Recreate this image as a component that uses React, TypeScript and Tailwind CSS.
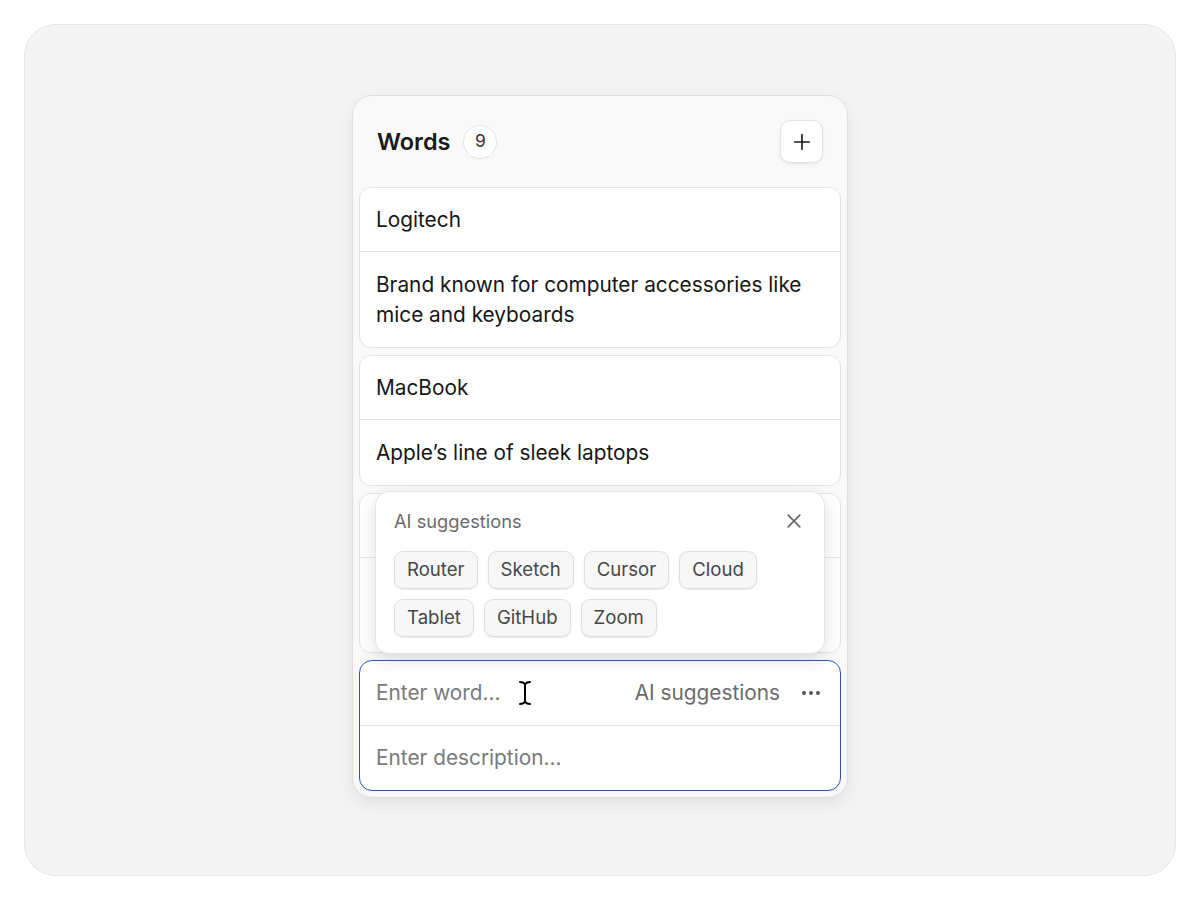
import React from 'react';

type Word = { word: string; description: string };

const words: Word[] = [
  { word: 'Logitech', description: 'Brand known for computer accessories like mice and keyboards' },
  { word: 'MacBook', description: 'Apple’s line of sleek laptops' },
  { word: 'Keychron', description: 'Mechanical keyboards built for Mac and Windows' },
];

const suggestions = [['Router', 'Sketch', 'Cursor', 'Cloud'], ['Tablet', 'GitHub', 'Zoom']];

function WordCard({ item }: { item: Word }) {
  return (
    <div className="rounded-[12px] border border-[#e3e3e3] bg-white">
      <div className="flex h-[63px] items-center px-4 text-[20.8px] leading-[30px] text-[#161616]">{item.word}</div>
      <div className="border-t border-[#e5e5e5] px-4 py-[17.5px] text-[20.8px] leading-[30px] text-[#161616]">
        {item.description}
      </div>
    </div>
  );
}

function SuggestionsPopup() {
  return (
    <div className="absolute left-[16px] right-[16px] top-[-2px] rounded-[14px] border border-[#e4e4e4] bg-white px-[18px] pt-[17px] pb-[16px] shadow-[0_6px_18px_rgba(0,0,0,0.12)]">
      <div className="flex items-center justify-between">
        <span className="text-[18.3px] leading-[24px] text-[#6b6b6b]">AI suggestions</span>
        <svg width="20" height="20" viewBox="0 0 24 24" fill="none" stroke="#666" strokeWidth="2" strokeLinecap="round" className="mr-[2px]">
          <path d="M5 5l14 14M19 5L5 19" />
        </svg>
      </div>
      <div className="mt-[18px] flex flex-col gap-[10px]">
        {suggestions.map((row, i) => (
          <div key={i} className="flex gap-[10px]">
            {row.map((s) => (
              <span
                key={s}
                className="flex h-[38px] items-center rounded-[9px] border border-[#dedede] bg-[#f7f7f7] px-[12px] text-[18.6px] text-[#474747] shadow-[0_1px_2px_rgba(0,0,0,0.08)]"
              >
                {s}
              </span>
            ))}
          </div>
        ))}
      </div>
    </div>
  );
}

export default function App() {
  return (
    <div className="min-h-[900px] bg-white p-6" style={{ fontFamily: 'Inter, "Noto Sans", sans-serif' }}>
      <div className="flex h-[852px] justify-center rounded-[32px] border border-[#e6e6e6] bg-[#f4f4f4] pt-[70px]">
        <div className="h-fit w-[496px] rounded-[20px] border border-[#dedede] bg-[#f9f9f9] shadow-[0_6px_16px_rgba(0,0,0,0.08)]">
          <div className="flex h-[91px] items-center justify-between px-6">
            <div className="flex items-center gap-[13px]">
              <h1 className="text-[23.5px] font-semibold text-[#1a1a1a]">Words</h1>
              <span className="flex h-[34px] w-[34px] items-center justify-center rounded-full border border-[#e2e2e2] bg-white text-[17.5px] text-[#333]">
                9
              </span>
            </div>
            <button className="flex h-[43px] w-[43px] items-center justify-center rounded-[10px] border border-[#e3e3e3] bg-white shadow-[0_1px_3px_rgba(0,0,0,0.08)]">
              <svg width="22" height="22" viewBox="0 0 24 24" fill="none" stroke="#1a1a1a" strokeWidth="1.8" strokeLinecap="round">
                <path d="M12 4v16M4 12h16" />
              </svg>
            </button>
          </div>

          <div className="flex flex-col gap-[7px] px-[6px] pb-[6px]">
            <WordCard item={words[0]} />
            <WordCard item={words[1]} />
            <div className="relative">
              <div className="rounded-[12px] border border-[#e3e3e3] bg-white">
                <div className="h-[63px]" />
                <div className="h-[95px] border-t border-[#e5e5e5]" />
              </div>
              <SuggestionsPopup />
            </div>

            <div className="rounded-[13px] border-[1.5px] border-[#2d52d4] bg-white">
              <div className="flex h-[64px] items-center px-4 text-[20.8px]">
                <span className="text-[#7a7a7a]">Enter word...</span>
                <svg width="14" height="26" viewBox="0 0 14 26" className="ml-[17px]">
                  <path d="M2 2c3 0 4 1 5 2 1-1 2-2 5-2M2 24c3 0 4-1 5-2 1 1 2 2 5 2M7 4v18" fill="none" stroke="#fff" strokeWidth="4" strokeLinecap="round" />
                  <path d="M2 2c3 0 4 1 5 2 1-1 2-2 5-2M2 24c3 0 4-1 5-2 1 1 2 2 5 2M7 4v18" fill="none" stroke="#000" strokeWidth="2" strokeLinecap="round" />
                </svg>
                <span className="ml-auto text-[#6b6b6b]">AI suggestions</span>
                <svg width="20" height="6" viewBox="0 0 20 6" className="ml-[21px] mr-[3px]">
                  <circle cx="3" cy="3" r="2" fill="#555" />
                  <circle cx="10" cy="3" r="2" fill="#555" />
                  <circle cx="17" cy="3" r="2" fill="#555" />
                </svg>
              </div>
              <div className="flex h-[65px] items-center border-t border-[#e5e5e5] px-4 text-[20.8px] text-[#7a7a7a]">
                Enter description...
              </div>
            </div>
          </div>
        </div>
      </div>
    </div>
  );
}
